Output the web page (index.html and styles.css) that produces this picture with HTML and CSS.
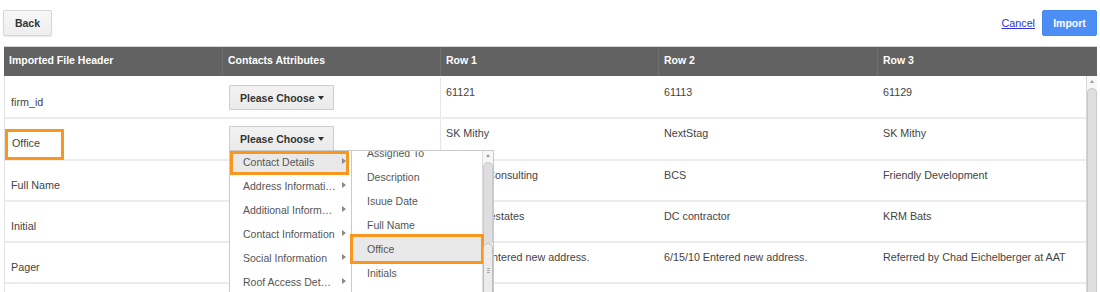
FILE: index.html
```html
<!DOCTYPE html>
<html>
<head>
<meta charset="utf-8">
<title>Import Contacts</title>
<link rel="stylesheet" href="styles.css">
</head>
<body>
<div class="page">
  <div class="toolbar">
    <button class="btn btn-back">Back</button>
    <div class="actions">
      <a class="cancel" href="#">Cancel</a>
      <button class="btn btn-import">Import</button>
    </div>
  </div>

  <div class="grid">
    <div class="grid-head">
      <div class="th">Imported File Header</div>
      <div class="th">Contacts Attributes</div>
      <div class="th">Row 1</div>
      <div class="th">Row 2</div>
      <div class="th">Row 3</div>
    </div>

    <div class="grid-body">
      <div class="rows">
        <div class="row">
          <div class="td name">firm_id</div>
          <div class="td attr"><button class="choose">Please Choose<span class="caret"></span></button></div>
          <div class="td val first">61121</div>
          <div class="td val">61113</div>
          <div class="td val">61129</div>
        </div>

        <div class="row">
          <div class="td name"><span class="mark">Office</span></div>
          <div class="td attr">
            <div class="dropdown">
              <button class="choose">Please Choose<span class="caret"></span></button>
              <div class="menu">
                <div class="menu-item active">Contact Details<span class="arrow"></span>
                  <div class="submenu">
                    <div class="sub-view">
                      <div class="sub-list">
                        <div class="sub-item">Assigned To</div>
                        <div class="sub-item">Description</div>
                        <div class="sub-item">Isuue Date</div>
                        <div class="sub-item">Full Name</div>
                        <div class="sub-item selected">Office</div>
                        <div class="sub-item">Initials</div>
                      </div>
                    </div>
                    <div class="sub-scroll">
                      <div class="sb-up"></div>
                      <div class="sb-track"></div>
                      <div class="sb-thumb"><span class="grip"></span></div>
                    </div>
                  </div>
                </div>
                <div class="menu-item">Address Informati…<span class="arrow"></span></div>
                <div class="menu-item">Additional Inform…<span class="arrow"></span></div>
                <div class="menu-item">Contact Information<span class="arrow"></span></div>
                <div class="menu-item">Social Information<span class="arrow"></span></div>
                <div class="menu-item">Roof Access Det…<span class="arrow"></span></div>
              </div>
            </div>
          </div>
          <div class="td val first">SK Mithy</div>
          <div class="td val">NextStag</div>
          <div class="td val">SK Mithy</div>
        </div>

        <div class="row">
          <div class="td name">Full Name</div>
          <div class="td attr"></div>
          <div class="td val first">Friendly Consulting</div>
          <div class="td val">BCS</div>
          <div class="td val">Friendly Development</div>
        </div>

        <div class="row">
          <div class="td name">Initial</div>
          <div class="td attr"></div>
          <div class="td val first">DC Real estates</div>
          <div class="td val">DC contractor</div>
          <div class="td val">KRM Bats</div>
        </div>

        <div class="row">
          <div class="td name">Pager</div>
          <div class="td attr"></div>
          <div class="td val first">6/15/10 Entered new address.</div>
          <div class="td val">6/15/10 Entered new address.</div>
          <div class="td val">Referred by Chad Eichelberger at AAT</div>
        </div>
      </div>

      <div class="vscroll">
        <div class="sb-up"></div>
        <div class="vs-thumb"></div>
      </div>
    </div>
  </div>
</div>
</body>
</html>
```

FILE: styles.css
```css
* { box-sizing: border-box; }

html, body {
  margin: 0;
  height: 100%;
  overflow: hidden;
  background: #fff;
}

body {
  font-family: "Liberation Sans", Arial, sans-serif;
  font-size: 10.75px;
  color: #444;
}

.page {
  padding: 10px 3px 0 4px;
}

/* toolbar */
.toolbar {
  display: flex;
  justify-content: space-between;
  align-items: center;
  height: 26px;
}

.btn {
  font-family: inherit;
  font-weight: bold;
  font-size: 10.5px;
  height: 26px;
  padding: 0;
  border-radius: 2px;
}

.btn-back {
  width: 49px;
  margin-left: -1px;
  color: #333;
  background: linear-gradient(#f7f7f7, #eeeeee);
  border: 1px solid #d6d6d6;
  box-shadow: 0 1px 1px rgba(0, 0, 0, 0.08);
}

.actions {
  display: flex;
  align-items: center;
  gap: 7px;
}

.cancel {
  color: #3030d8;
  text-decoration: underline;
  font-size: 10.75px;
}

.btn-import {
  width: 55px;
  color: #fff;
  background: #4c8ef6;
  border: 1px solid #468aef;
}

/* grid */
.grid {
  margin-top: 10px;
}

.grid-head {
  display: grid;
  grid-template-columns: 218px 218px 218px 219px 1fr;
  height: 30px;
  background: #626262;
  border-top: 1px solid #d4d4d4;
}

.th {
  color: #fff;
  font-weight: bold;
  font-size: 10.5px;
  line-height: 27px;
  padding-left: 5px;
  border-left: 1px solid #707070;
}

.th:first-child {
  border-left: 0;
}

.grid-body {
  display: flex;
  height: 216px;
  border-left: 1px solid #e2e2e2;
}

.rows {
  flex: 1;
  padding-top: 2px;
}

.row {
  display: grid;
  grid-template-columns: 217px 218px 218px 219px 1fr;
  height: 41.3px;
  border-bottom: 2px solid #ececec;
}

.td {
  line-height: 13px;
  white-space: nowrap;
}

.name {
  padding: 18px 0 0 6px;
}

.attr {
  padding: 7px 0 0 7px;
}

.val {
  padding: 8px 0 0 6px;
}

.val.first {
  border-left: 1px solid #e6e6e6;
  padding-left: 5px;
}

.mark {
  display: inline-block;
  width: 59px;
  height: 31px;
  margin: -9px 0 0 -6px;
  padding: 5px 0 0 4px;
  border: 3px solid #f8961d;
}

/* Please Choose button */
.choose {
  display: flex;
  align-items: center;
  width: 105px;
  height: 25px;
  padding: 0 0 0 10px;
  font-family: inherit;
  font-weight: bold;
  font-size: 10.5px;
  color: #333;
  background: linear-gradient(#f2f2f2, #ebebeb);
  border: 1px solid #cdcdcd;
  border-radius: 1px;
}

.caret {
  width: 0;
  height: 0;
  margin-left: 3px;
  border-left: 3.5px solid transparent;
  border-right: 3.5px solid transparent;
  border-top: 4px solid #333;
}

/* dropdown */
.dropdown {
  position: relative;
  display: inline-block;
}

.menu {
  position: absolute;
  left: 0;
  top: 24px;
  width: 123px;
  height: 142px;
  background: #fff;
  border: 1px solid #c9c9c9;
  border-bottom: 0;
  z-index: 10;
  font-size: 10.5px;
}

.menu-item {
  position: relative;
  height: 24px;
  line-height: 22px;
  padding-left: 13px;
  color: #555;
  white-space: nowrap;
}

.menu-item.active {
  background: #e9e9e9;
  margin-right: 2px;
  box-shadow: inset 0 0 0 3px #f8961d;
}

.arrow {
  position: absolute;
  right: 5px;
  top: 7px;
  width: 0;
  height: 0;
  border-top: 3px solid transparent;
  border-bottom: 3px solid transparent;
  border-left: 4px solid #8a8a8a;
}

.menu-item.active .arrow {
  right: 3px;
}

.submenu {
  position: absolute;
  left: 121px;
  top: -1px;
  width: 143px;
  height: 142px;
  display: flex;
  background: #fff;
  border: 1px solid #c9c9c9;
  border-bottom: 0;
  z-index: 11;
}

.sub-view {
  flex: 1;
  clip-path: inset(0 -6px 0 -6px);
}

.sub-list {
  margin-top: -10px;
}

.sub-item {
  height: 24px;
  line-height: 24px;
  margin: 0 1px;
  padding-left: 14px;
  color: #555;
}

.sub-item.selected {
  background: #e9e9e9;
  outline: 3px solid #f8961d;
}

/* scrollbars */
.sub-scroll {
  width: 11px;
  display: flex;
  flex-direction: column;
  border-left: 1px solid #dcdcdc;
  background: #f7f7f7;
}

.sb-up {
  position: relative;
  height: 10px;
  flex: none;
}

.sb-up::after {
  content: "";
  position: absolute;
  left: 3px;
  top: 3px;
  border-left: 2px solid transparent;
  border-right: 2px solid transparent;
  border-bottom: 3px solid #9a9a9a;
}

.sb-track {
  height: 81px;
  flex: none;
  margin: 1px 0 0 0;
  background: #dedede;
  border: 1px solid #cbcbcb;
  border-bottom: 0;
  border-radius: 5px 5px 0 0;
}

.sb-thumb {
  position: relative;
  flex: 1;
  background: #ececec;
  border: 1px solid #bdbdbd;
  border-bottom: 0;
  border-radius: 5px 5px 0 0;
}

.grip {
  position: absolute;
  left: 3px;
  top: 24px;
  width: 3px;
  height: 5px;
  border-top: 1px solid #aaa;
  border-bottom: 1px solid #aaa;
}

.grip::after {
  content: "";
  position: absolute;
  left: 0;
  top: 1px;
  width: 3px;
  border-top: 1px solid #aaa;
}

.vscroll {
  width: 11px;
  display: flex;
  flex-direction: column;
  border-left: 1px solid #d6d6d6;
  background: #f7f7f7;
  padding-top: 1px;
}

.vs-thumb {
  flex: 1;
  margin-top: 1px;
  background: #dedede;
  border: 1px solid #c9c9c9;
  border-bottom: 0;
  border-radius: 5px 5px 0 0;
}
```
